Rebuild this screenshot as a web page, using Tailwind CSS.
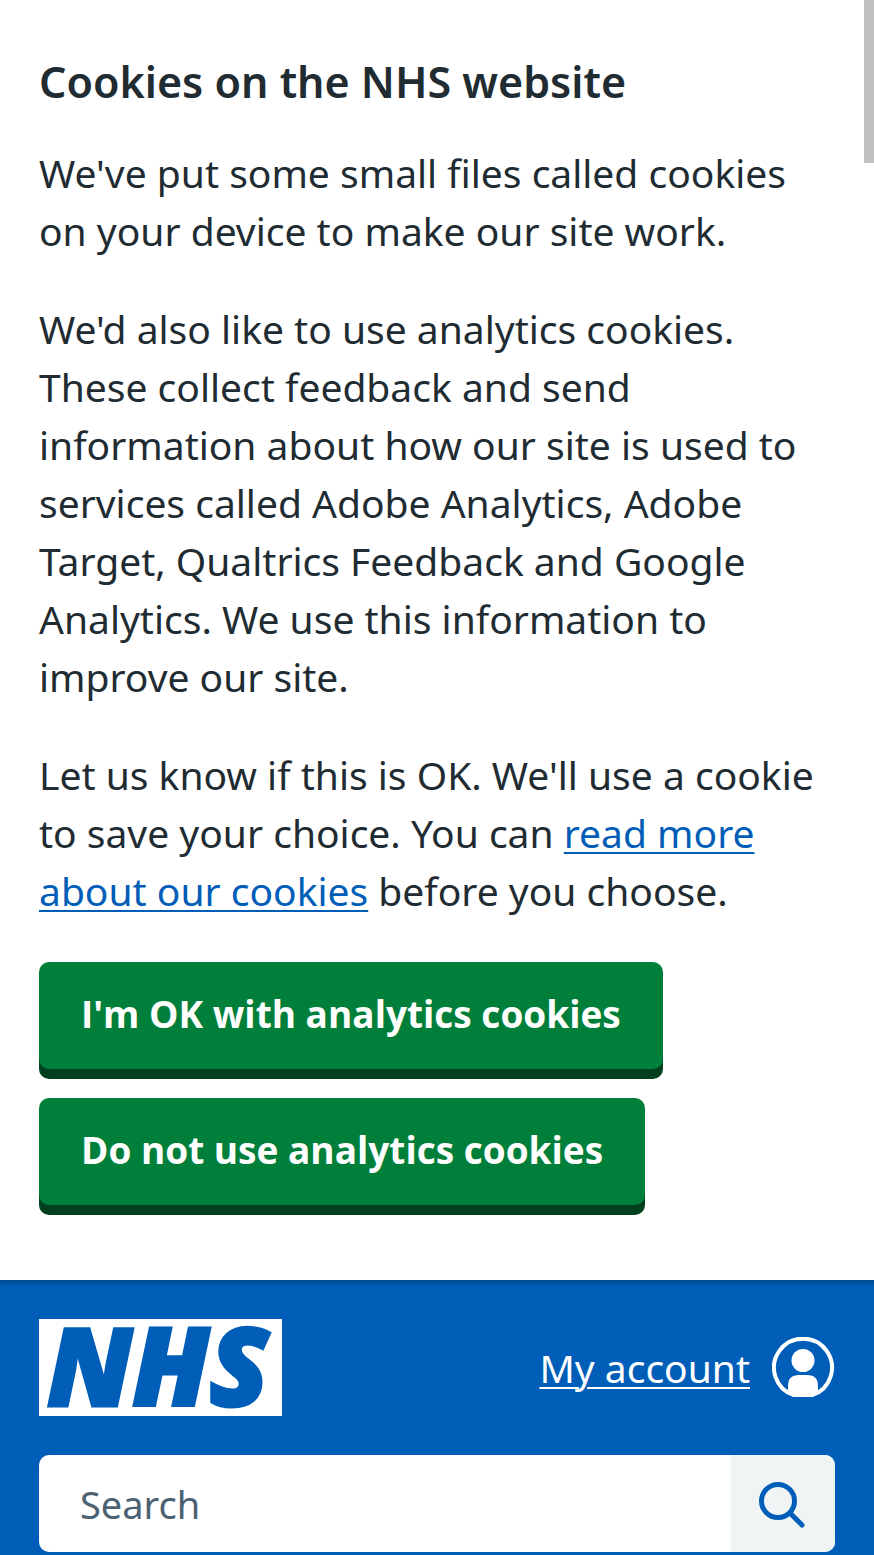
<!DOCTYPE html>
<html lang="en">
<head>
<meta charset="utf-8">
<meta name="viewport" content="width=device-width, initial-scale=1">
<title>NHS</title>
<script src="https://cdn.jsdelivr.net/npm/@tailwindcss/browser@4"></script>
</head>
<body class="flex min-h-screen flex-col bg-[#005eb8] font-['Noto_Sans','Open_Sans',sans-serif] text-[39px] leading-[58px] text-[#212b32]">
  <section aria-label="Cookies on the NHS website" class="bg-white px-[39px] pt-[54px] pb-[75px]">
    <h2 class="mb-[34px] text-[43px] leading-[56px] font-semibold">Cookies on the NHS website</h2>
    <div class="flex flex-col gap-10">
      <p>We've put some small files called cookies on your device to make our site work.</p>
      <p>We'd also like to use analytics cookies. These collect feedback and send information about how our site is used to services called Adobe Analytics, Adobe Target, Qualtrics Feedback and Google Analytics. We use this information to improve our site.</p>
      <p>Let us know if this is OK. We'll use a cookie to save your choice. You can <a href="#" class="text-[#005eb8] underline decoration-2 underline-offset-4">read more about our cookies</a> before you choose.</p>
    </div>
    <div class="mt-[42px] flex flex-col items-start gap-[29px] font-['Open_Sans','Noto_Sans',sans-serif] text-[37px] font-bold text-white">
      <button type="button" class="h-[107px] rounded-[10px] bg-[#007f3b] px-[42px] pb-1 shadow-[0_10px_0_#00401e]">I'm OK with analytics cookies</button>
      <button type="button" class="h-[107px] rounded-[10px] bg-[#007f3b] px-[42px] pb-1 shadow-[0_10px_0_#00401e]">Do not use analytics cookies</button>
    </div>
  </section>
  <header class="px-[39px] pt-[39px] text-white shadow-[inset_0_7px_4px_-4px_#004a91]">
    <div class="flex items-center justify-between">
      <a href="#" aria-label="NHS homepage" class="block">
        <svg width="243" height="97" viewBox="0 0 243 97" class="block overflow-visible">
          <rect width="243" height="97" fill="#fff"/>
          <text x="8" y="87" font-family="Open Sans, Noto Sans, sans-serif" font-size="108" font-weight="800" font-style="italic" fill="#005eb8" stroke="#005eb8" stroke-width="3">NHS</text>
        </svg>
      </a>
      <a href="#" class="flex items-center gap-[22px]">
        <span class="underline decoration-2 underline-offset-4">My account</span>
        <svg width="63" height="62" viewBox="0 0 63 62" class="block" aria-hidden="true">
          <path d="M22 58.200A29 29 0 1 1 40 58.200" fill="none" stroke="#fff" stroke-width="4"/>
          <circle cx="31" cy="23.500" r="11.500" fill="#fff"/>
          <path d="M16 54V49Q16 38 27 38H35Q46 38 46 49V54L41 60H21Z" fill="#fff"/>
        </svg>
      </a>
    </div>
    <form class="mt-[39px] flex h-[97px] overflow-hidden rounded-[10px] bg-white">
      <input type="search" aria-label="Search" placeholder="Search" class="min-w-0 flex-1 px-[41px] text-[38px] text-[#212b32] outline-none placeholder:text-[#4c6272]">
      <button type="submit" aria-label="Search" class="flex w-[104px] items-center justify-center bg-[#f0f4f5]">
        <svg width="50" height="50" viewBox="0 0 50 50" fill="none" stroke="#005eb8" stroke-width="5" stroke-linecap="round" aria-hidden="true">
          <circle cx="20" cy="22" r="16.500"/>
          <path d="M32 34L44 46"/>
        </svg>
      </button>
    </form>
  </header>
  <div class="fixed top-0 right-0 h-[163px] w-[10px] bg-[#c1c1c1]" aria-hidden="true"></div>
</body>
</html>
